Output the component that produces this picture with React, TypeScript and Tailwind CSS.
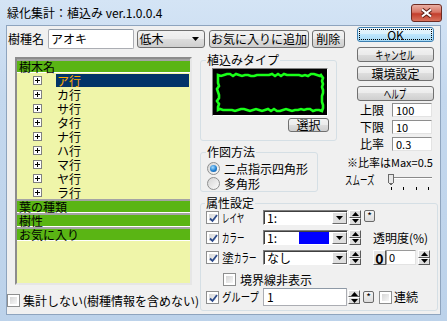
import React from "react";

const FONT = "font-['Noto_Sans_CJK_JP','Noto_Sans',sans-serif]";

function makeJag(): string {
  let s = 11;
  const r = () => {
    s = (s * 9301 + 49297) % 233280;
    return s / 233280;
  };
  const j = () => Math.round(r() * 2.4 - 1.2);
  const x0 = 5, y0 = 6, x1 = 109, y1 = 41;
  const pts: [number, number][] = [];
  for (let x = x0; x < x1; x += 3) pts.push([x, y0 + j()]);
  for (let y = y0; y < y1; y += 3) pts.push([x1 + j(), y]);
  for (let x = x1; x > x0; x -= 3) pts.push([x, y1 + j()]);
  for (let y = y1; y > y0; y -= 3) pts.push([x0 + j(), y]);
  return "M" + pts.map((p) => p.join(",")).join("L") + "Z";
}
const JAG = makeJag();

const rows = ["ア行", "カ行", "サ行", "タ行", "ナ行", "ハ行", "マ行", "ヤ行", "ラ行"];

function Btn({ children, className = "" }: { children: React.ReactNode; className?: string }) {
  return (
    <div
      className={`flex items-center justify-center rounded-[3px] border border-[#707070] bg-[linear-gradient(#f2f2f2,#ebebeb_50%,#dddddd_50%,#cfcfcf)] text-[12px] leading-[12px] text-black ${className}`}
    >
      {children}
    </div>
  );
}

function Check({ checked = false }: { checked?: boolean }) {
  return (
    <div className="w-[13px] h-[13px] shrink-0 border border-[#8e8f8f] bg-white p-[2px]">
      <div className="w-full h-full bg-[linear-gradient(135deg,#d6d6d6,#f6f6f6)] relative">
        {checked && (
          <svg width="9" height="9" viewBox="0 0 9 9" className="absolute left-0 top-0">
            <path d="M1 4.5 L3.5 7 L8 1" fill="none" stroke="#2b4a8b" strokeWidth="1.8" />
          </svg>
        )}
      </div>
    </div>
  );
}

function Radio({ on = false }: { on?: boolean }) {
  return (
    <div className="w-[13px] h-[13px] shrink-0 rounded-full border border-[#8e8f8f] bg-[linear-gradient(135deg,#d4d4d4,#fbfbfb)] flex items-center justify-center">
      {on && <div className="w-[7px] h-[7px] rounded-full bg-[radial-gradient(circle_at_40%_35%,#a6dcff,#1f7fd0_55%,#0b4f95)]" />}
    </div>
  );
}

function DropBtn() {
  return (
    <div className="w-[15px] h-full shrink-0 bg-[#dedede] border-t border-l border-t-white border-l-white border-b border-r border-b-[#6a6a6a] border-r-[#6a6a6a] flex items-center justify-center">
      <svg width="7" height="4" viewBox="0 0 7 4">
        <path d="M0 0H7L3.5 4Z" fill="#000" />
      </svg>
    </div>
  );
}

function Combo({ children, blue = false }: { children: React.ReactNode; blue?: boolean }) {
  return (
    <div className="w-[85px] h-[15px] shrink-0 flex bg-white border border-t-[#7f7f7f] border-l-[#7f7f7f] border-b-white border-r-white shadow-[inset_1px_1px_0_#404040] pl-[1px] pt-[1px]">
      <div className="flex-1 flex items-center text-[12px] leading-[12px] pl-[2px]">
        <span className="w-[32px]">{children}</span>
        {blue && <div className="w-[30px] h-full bg-[#0000ff]" />}
      </div>
      <DropBtn />
    </div>
  );
}

function Spin({ h = 15 }: { h?: number }) {
  return (
    <div className="w-[12px] shrink-0 flex flex-col" style={{ height: h }}>
      {[0, 1].map((i) => (
        <div
          key={i}
          className="flex-1 bg-[#dedede] border-t border-l border-t-white border-l-white border-b border-r border-b-[#5a5a5a] border-r-[#5a5a5a] flex items-center justify-center"
        >
          <svg width="7" height="4" viewBox="0 0 7 4">
            <path d={i === 0 ? "M0 4H7L3.5 0Z" : "M0 0H7L3.5 4Z"} fill="#000" />
          </svg>
        </div>
      ))}
    </div>
  );
}

function Star({ className = "" }: { className?: string }) {
  return (
    <div
      className={`w-[11px] h-[12px] shrink-0 rounded-[2px] border border-[#6a6a6a] bg-[linear-gradient(#f4f4f4,#dcdcdc)] flex items-center justify-center text-[10px] leading-[10px] ${className}`}
    >
      *
    </div>
  );
}

function TreeHeader({ label }: { label: string }) {
  return (
    <div className="h-[14px] shrink-0 border-t-2 border-t-[#a4a4a4] border-b border-b-white bg-[#5ab514] text-[12px] leading-[11px] pl-[2px] text-black">
      {label}
    </div>
  );
}

function NumField({ label, value }: { label: string; value: string }) {
  return (
    <div className="flex items-center h-[14px] shrink-0">
      <span className="ml-[15px] w-[24px] text-[12px] leading-[12px]">{label}</span>
      <div className="ml-[8px] w-[40px] h-[14px] bg-white border border-t-[#8e8e8e] border-l-[#8e8e8e] border-b-[#e3e3e3] border-r-[#e3e3e3] text-[11px] leading-[12px] pl-[3px]">
        {value}
      </div>
    </div>
  );
}

export default function App() {
  return (
    <div
      className={`w-[447px] h-[321px] flex flex-col bg-[linear-gradient(#d4e4f5,#c4d8ee_30%,#bcd2ea)] ${FONT} text-black overflow-hidden`}
    >
      {/* title bar */}
      <div className="h-[26px] shrink-0 flex items-start">
        <span className="ml-[7px] mt-[5px] text-[12px] leading-[16px] text-black">緑化集計：植込み ver.1.0.0.4</span>
        <div className="ml-auto mr-[5px] mt-[4px] w-[31px] h-[18px] rounded-[3px] border border-[#6f2b22] bg-[linear-gradient(#eab0a4,#d77565_45%,#c33e2c_55%,#d8725c)] flex items-center justify-center">
          <svg width="13" height="10" viewBox="0 0 13 10">
            <path d="M2 1.5 L11 8.5 M11 1.5 L2 8.5" stroke="#5a1d14" strokeWidth="4" />
            <path d="M2 1.5 L11 8.5 M11 1.5 L2 8.5" stroke="#ffffff" strokeWidth="2.2" />
          </svg>
        </div>
      </div>

      {/* client */}
      <div className="mx-[7px] h-[288px] shrink-0 bg-[#f0f0f0] shadow-[0_0_0_1px_#8ea4be] grid grid-cols-[189px_149px_95px] grid-rows-[29px_141px_91px_27px]">
        {/* top row */}
        <div className="col-start-1 col-span-2 row-start-1 flex items-start pt-[3px] whitespace-nowrap">
          <span className="ml-[1px] mt-[3px] w-[36px] text-[12px] leading-[14px]">樹種名</span>
          <div className="ml-[4px] w-[87px] h-[20px] bg-white border border-[#abadb3] border-t-[#8e99a6] rounded-[2px] text-[12px] leading-[18px] pl-[2px]">
            アオキ
          </div>
          <div className="ml-[3px] mt-[1px] w-[70px] h-[18px] flex items-center rounded-[3px] border border-[#707070] bg-[linear-gradient(#f2f2f2,#ebebeb_50%,#dddddd_50%,#cfcfcf)] text-[12px] leading-[12px]">
            <span className="pl-[2px] flex-1">低木</span>
            <svg width="7" height="4" viewBox="0 0 7 4" className="mr-[5px]">
              <path d="M0 0H7L3.5 4Z" fill="#000" />
            </svg>
          </div>
          <Btn className="ml-[4px] mt-[1px] w-[101px] h-[18px]">お気に入りに追加</Btn>
          <Btn className="ml-[3px] mt-[1px] w-[34px] h-[18px]">削除</Btn>
        </div>

        {/* right column */}
        <div className="col-start-3 row-start-1 row-span-2 flex flex-col whitespace-nowrap">
          <div className="ml-[12px] mt-[1px] w-[77px] h-[15px] rounded-[3px] border border-[#3c7fb1] bg-[linear-gradient(#eaf6fd,#d9f0fc_50%,#bee6fd_50%,#a7d9f5)] p-[1px]">
            <div className="w-full h-full border border-dotted border-black flex items-center justify-center text-[12px] leading-[12px]">
              OK
            </div>
          </div>
          <Btn className="ml-[12px] mt-[5px] w-[77px] h-[15px]">
            <span className="inline-block scale-x-[0.65]">キャンセル</span>
          </Btn>
          <Btn className="ml-[12px] mt-[4px] w-[77px] h-[15px]">環境設定</Btn>
          <Btn className="ml-[12px] mt-[5px] w-[77px] h-[15px]">
            <span className="inline-block scale-x-[0.62]">ヘルプ</span>
          </Btn>
          <div className="mt-[2px]">
            <NumField label="上限" value="100" />
          </div>
          <div className="mt-[3px]">
            <NumField label="下限" value="10" />
          </div>
          <div className="mt-[3px]">
            <NumField label="比率" value="0.3" />
          </div>
          <div className="mt-[5px] ml-[2px] h-[12px] text-[11px] leading-[12px]">※比率はMax=0.5</div>
          <div className="mt-[6px] h-[17px] flex items-start">
            <div className="w-[43px] shrink-0 text-[12px] leading-[12px]">
              <span className="inline-block origin-left scale-x-[0.62]">スムーズ</span>
            </div>
            <svg width="46" height="17" viewBox="0 0 46 17" shapeRendering="crispEdges">
              <rect x="2" y="3" width="42" height="1" fill="#8a8a8a" />
              <rect x="2" y="4" width="42" height="1" fill="#ffffff" />
              <path d="M0.5 0.5H5.5V8.5L3 10.5L0.5 8.5Z" fill="#e8e8e8" stroke="#6a6a6a" />
              <rect x="3" y="13" width="1" height="3" fill="#000" />
              <rect x="15" y="13" width="1" height="3" fill="#000" />
              <rect x="28" y="13" width="1" height="3" fill="#000" />
              <rect x="40" y="13" width="1" height="3" fill="#000" />
            </svg>
          </div>
        </div>

        {/* middle groups */}
        <div className="col-start-2 row-start-2 flex flex-col whitespace-nowrap">
          <fieldset className="ml-[4px] mt-[-1px] w-[137px] h-[87px] border border-[#d5dfe5] rounded-[3px]">
            <legend className="ml-[5px] px-[1px] text-[12px] leading-[12px]">植込みタイプ</legend>
            <div className="ml-[11px] mt-[2px] w-[116px] h-[48px] bg-black border border-t-[#808080] border-l-[#808080] border-b-white border-r-white">
              <svg width="114" height="46" viewBox="0 0 114 46">
                <path d={JAG} fill="none" stroke="#19ff19" strokeWidth="2.6" />
              </svg>
            </div>
            <Btn className="ml-[87px] mt-[2px] w-[41px] h-[14px]">選択</Btn>
          </fieldset>
          <fieldset className="ml-[4px] mt-[5px] w-[118px] h-[46px] border border-[#d5dfe5] rounded-[3px]">
            <legend className="ml-[5px] px-[1px] text-[12px] leading-[12px]">作図方法</legend>
            <div className="mt-[4px] ml-[6px] flex items-center h-[13px]">
              <Radio on />
              <span className="ml-[4px] text-[12px] leading-[12px]">二点指示四角形</span>
            </div>
            <div className="mt-[2px] ml-[6px] flex items-center h-[13px]">
              <Radio />
              <span className="ml-[4px] text-[12px] leading-[12px]">多角形</span>
            </div>
          </fieldset>
        </div>

        {/* tree panel */}
        <div className="col-start-1 row-start-2 row-span-2">
          <div className="ml-[8px] mt-[2px] w-[177px] h-[228px] border-2 border-t-[#8c8c8c] border-l-[#8c8c8c] border-b-[#e6e6e6] border-r-[#e6e6e6] bg-[#eff5a9] flex flex-col overflow-hidden">
            <TreeHeader label="樹木名" />
            {rows.map((r, i) => (
              <div key={r} className="h-[14px] shrink-0 flex items-center">
                <div className="ml-[16px] w-[9px] h-[9px] shrink-0 border border-[#808080] bg-white">
                  <svg width="7" height="7" viewBox="0 0 7 7" shapeRendering="crispEdges">
                    <path d="M1 3.5H6M3.5 1V6" stroke="#000" strokeWidth="1" />
                  </svg>
                </div>
                <div
                  className={`ml-[14px] mr-[1px] flex-1 h-[13px] mt-[1px] pl-[1px] text-[12px] leading-[13px] ${
                    i === 0 ? "bg-[#023468] text-[#ffaa00]" : "text-black"
                  }`}
                >
                  {r}
                </div>
              </div>
            ))}
            <TreeHeader label="葉の種類" />
            <TreeHeader label="樹性" />
            <TreeHeader label="お気に入り" />
          </div>
        </div>

        {/* 属性設定 */}
        <div className="col-start-2 col-span-2 row-start-3 row-span-2 whitespace-nowrap">
          <fieldset className="ml-[4px] mt-[1px] w-[238px] h-[114px] border border-[#d5dfe5] rounded-[3px]">
            <legend className="ml-[4px] px-[1px] text-[12px] leading-[12px]">属性設定</legend>
            {/* レイヤ */}
            <div className="mt-[1px] h-[15px] flex items-center">
              <div className="ml-[5px] w-[57px] flex items-center">
                <Check checked />
                <span className="ml-[3px] inline-block origin-left scale-x-[0.62] text-[12px] leading-[12px]">レイヤ</span>
              </div>
              <Combo>1:</Combo>
              <div className="ml-[1px]">
                <Spin />
              </div>
              <Star className="ml-[3px] self-start" />
            </div>
            {/* カラー */}
            <div className="mt-[5px] h-[15px] flex items-center">
              <div className="ml-[5px] w-[57px] flex items-center">
                <Check checked />
                <span className="ml-[3px] inline-block origin-left scale-x-[0.62] text-[12px] leading-[12px]">カラー</span>
              </div>
              <Combo blue>1:</Combo>
              <div className="ml-[1px]">
                <Spin />
              </div>
              <span className="ml-[12px] text-[12px] leading-[12px]">透明度(%)</span>
            </div>
            {/* 塗カラー */}
            <div className="mt-[5px] h-[15px] flex items-center">
              <div className="ml-[5px] w-[57px] flex items-center">
                <Check checked />
                <span className="ml-[3px] text-[12px] leading-[12px]">塗</span>
                <span className="inline-block origin-left scale-x-[0.62] text-[12px] leading-[12px]">カラー</span>
              </div>
              <Combo>なし</Combo>
              <div className="ml-[1px]">
                <Spin />
              </div>
              <div className="ml-[12px] w-[13px] h-[15px] bg-[#e4e4e4] border-t border-l border-t-white border-l-white border-b border-r border-b-[#5a5a5a] border-r-[#5a5a5a] flex items-center justify-center text-[14px] leading-[14px] font-bold">
                0
              </div>
              <div className="w-[30px] h-[15px] bg-white border border-t-[#9a9a9a] border-l-[#9a9a9a] border-b-[#e3e3e3] border-r-[#e3e3e3] text-[11px] leading-[13px] pl-[2px]">
                0
              </div>
              <div className="ml-[2px]">
                <Spin />
              </div>
            </div>
            {/* 境界線非表示 */}
            <div className="mt-[8px] h-[13px] flex items-center">
              <div className="ml-[22px]">
                <Check />
              </div>
              <span className="ml-[4px] text-[12px] leading-[12px]">境界線非表示</span>
            </div>
            {/* グループ */}
            <div className="mt-[2px] h-[18px] flex items-center">
              <div className="ml-[5px] w-[57px] flex items-center">
                <Check checked />
                <span className="ml-[3px] inline-block origin-left scale-x-[0.78] text-[12px] leading-[12px]">グループ</span>
              </div>
              <div className="w-[84px] h-[18px] bg-white border border-[#abadb3] border-t-[#8e99a6] text-[12px] leading-[16px] pl-[3px]">
                1
              </div>
              <div className="ml-[1px]">
                <Spin h={14} />
              </div>
              <Star className="ml-[3px]" />
              <div className="ml-[5px]">
                <Check />
              </div>
              <span className="ml-[2px] text-[12px] leading-[12px]">連続</span>
            </div>
          </fieldset>
        </div>

        {/* bottom checkbox */}
        <div className="col-start-1 row-start-4 flex items-start whitespace-nowrap">
          <div className="mt-[7px] flex items-center">
            <Check />
            <span className="ml-[3px] text-[12px] leading-[13px]">集計しない(樹種情報を含めない)</span>
          </div>
        </div>
      </div>
    </div>
  );
}
